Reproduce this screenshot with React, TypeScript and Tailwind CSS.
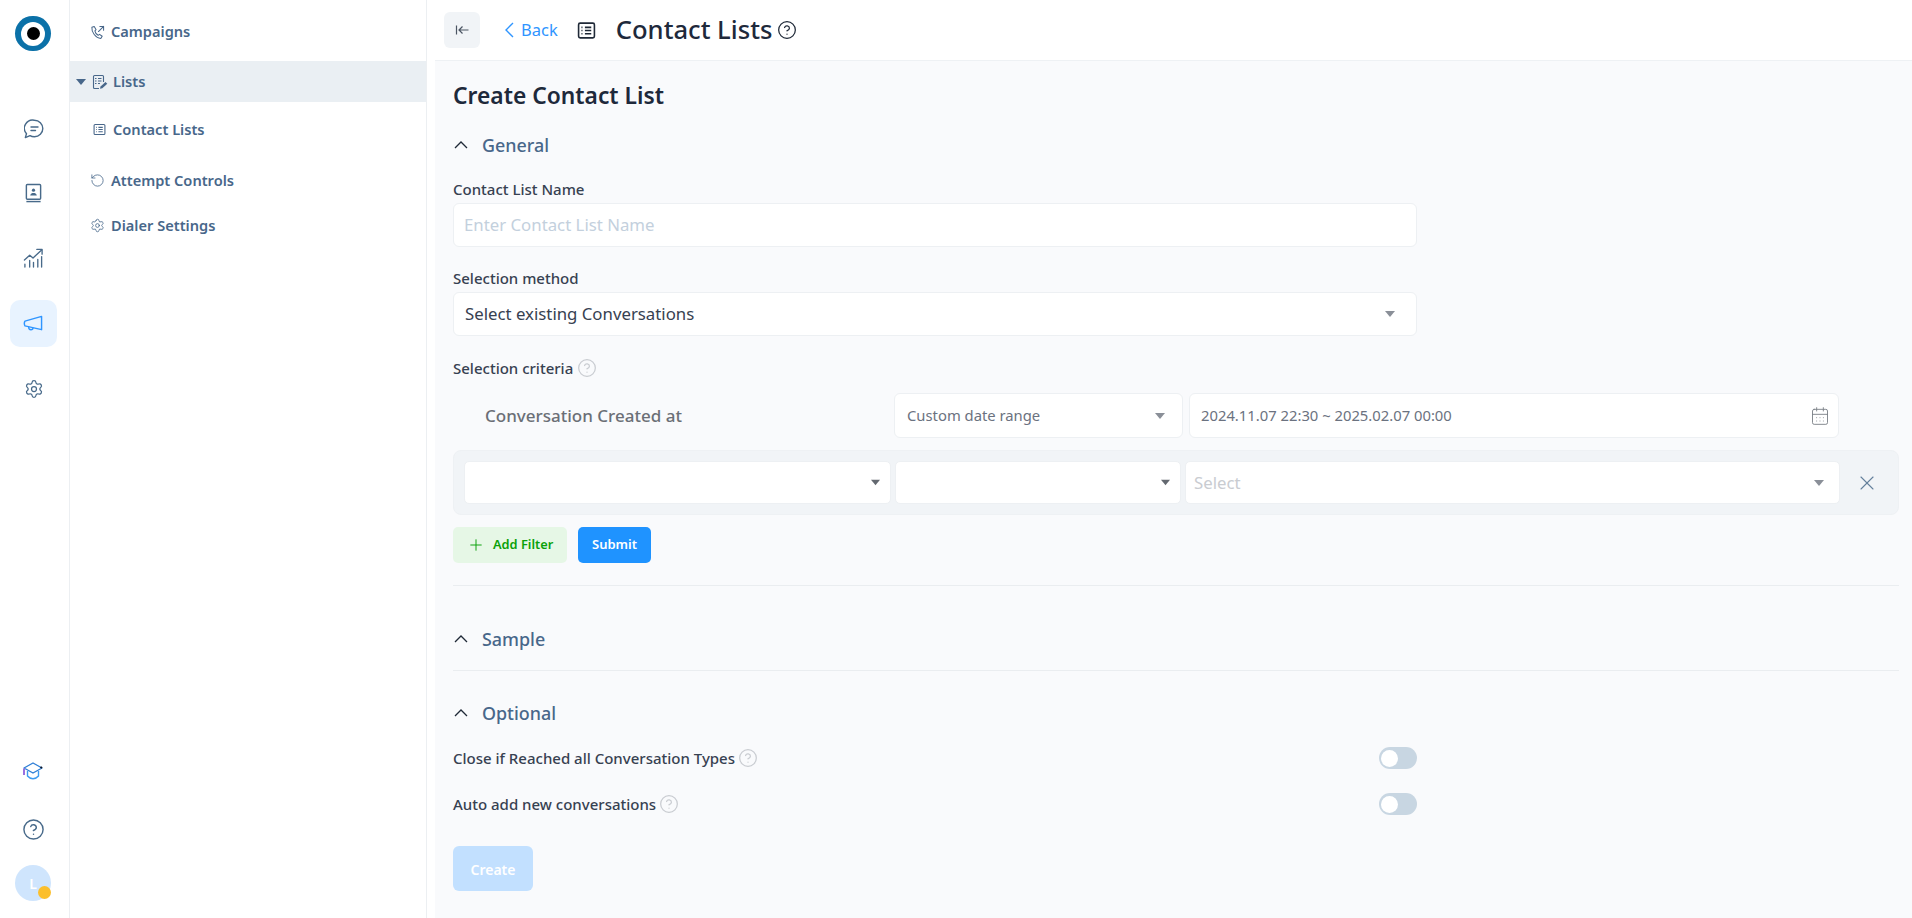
import { CalendarDays, CircleHelp, Plus, RotateCcw, Settings, X } from "lucide-react";

const font = "font-['Noto_Sans',sans-serif]";

function Caret({ className }: { className: string }) {
  return (
    <svg viewBox="0 0 10 6" className={className} fill="currentColor">
      <path d="M0 0h10L5 6z" />
    </svg>
  );
}

function RailButton({ children, active }: { children: React.ReactNode; active?: boolean }) {
  return (
    <div className={`w-[47px] h-[47px] rounded-[10px] flex items-center justify-center ${active ? "bg-[#e8f3ff] text-[#2f95ff]" : "text-[#486a8a]"}`}>
      {children}
    </div>
  );
}

function ChatIcon() {
  return (
    <svg viewBox="0 0 20 20" className="w-[20px] h-[20px]" fill="none" stroke="currentColor" strokeWidth="1.400" strokeLinecap="round" strokeLinejoin="round">
      <path d="M10.500 1.200a8.300 8.300 0 0 1 0 16.600c-1.800 0-3.300-.4-4.500-1.200l-4.700 2 1.200-3.800A8.300 8.300 0 0 1 10.500 1.200z" />
      <path d="M7 8h7M7 11.500h4.500" />
    </svg>
  );
}

function ContactBookIcon() {
  return (
    <svg viewBox="0 0 20 22" className="w-[19px] h-[21px]" fill="none" stroke="currentColor" strokeWidth="1.500">
      <rect x="2.500" y="1.500" width="15" height="15.500" rx="1" />
      <path d="M2.500 19.500h15" />
      <circle cx="10" cy="7.500" r="1.700" fill="currentColor" stroke="none" />
      <path d="M6.500 13c.4-2 2-2.600 3.500-2.600s3.100.6 3.500 2.600z" fill="currentColor" stroke="none" />
    </svg>
  );
}

function ChartIcon() {
  return (
    <svg viewBox="0 0 22 22" className="w-[21px] h-[21px]" fill="none" stroke="currentColor" strokeWidth="1.400" strokeLinecap="round" strokeLinejoin="round">
      <path d="M1.500 12.500 7 7.500l3.500 3L19.500 2" />
      <path d="M14.500 1.500h5.500v5" />
      <path d="M2 20v-3M7 20v-7M11 20v-5M15.500 20v-8M19.500 20v-11" />
    </svg>
  );
}

function MegaphoneIcon() {
  return (
    <svg viewBox="0 0 22 20" className="w-[21px] h-[19px]" fill="none" stroke="currentColor" strokeWidth="1.500" strokeLinejoin="round">
      <path d="M2 7.500 19.500 2.500v14L2 12.500c-.8-1.500-.8-3.500 0-5z" />
      <path d="M6 13.500c-.3 2 .8 3 2.300 3s2.200-.8 2.200-2" />
    </svg>
  );
}

function CapIcon() {
  return (
    <svg viewBox="0 0 20 18" className="w-[20px] h-[18px]" fill="none" strokeWidth="1.400" strokeLinejoin="round">
      <path d="M1 6 10 1l9 5-9 5z" stroke="#2f7fd6" />
      <path d="M4.500 9v5c1.500 1.800 3.500 2.700 5.500 2.700s4-.9 5.500-2.700V9" stroke="#3d9bf0" />
      <path d="M1 6.500V13" stroke="#9a6fe0" strokeWidth="2" />
      <path d="M17.500 5l1.500 1" stroke="#111827" strokeWidth="2" />
    </svg>
  );
}

function ListBoxIcon({ className }: { className: string }) {
  return (
    <svg viewBox="0 0 18 18" className={className} fill="none" stroke="currentColor" strokeWidth="1.500">
      <rect x="1.500" y="2" width="15" height="14" rx="1.500" />
      <path d="M7.500 6h6M7.500 9h6M7.500 12h6M4.200 6h1M4.200 9h1M4.200 12h1" />
    </svg>
  );
}

function ListEditIcon() {
  return (
    <svg viewBox="0 0 16 16" className="w-[16px] h-[16px]" fill="none" stroke="currentColor" strokeWidth="1.100">
      <path d="M11.500 8V2.500a1 1 0 0 0-1-1h-8a1 1 0 0 0-1 1v11a1 1 0 0 0 1 1H7" />
      <path d="M6 4.500h3.500M6 7h3.500M6 9.500h2M3 4.500h1.500M3 7h1.500M3 9.500h1.500" />
      <path d="M8 14.800l.5-2.300 5-4.500 1.800 1.800-5 4.500z" fill="currentColor" stroke="none" />
    </svg>
  );
}

function PhoneOutIcon() {
  return (
    <svg viewBox="0 0 16 16" className="w-[15px] h-[15px]" fill="none" stroke="currentColor" strokeWidth="1.100" strokeLinejoin="round" strokeLinecap="round">
      <path d="M4.500 1.500 2 2.500C1.500 7.500 6 14 11.500 14.500l1.500-2.500-2.800-2-1.500 1C7 10 5.500 8 5.200 6.300l1.300-1.300z" />
      <path d="M9 7l5.500-5.500M10.500 1.500h4v4" />
    </svg>
  );
}

function Help({ className }: { className: string }) {
  return <CircleHelp className={className} strokeWidth={1.500} />;
}

function Section({ title }: { title: string }) {
  return (
    <div className="flex items-center h-[24px]">
      <svg viewBox="0 0 14 8" className="w-[14px] h-[8px] text-[#1f2937] ml-[1px]" fill="none" stroke="currentColor" strokeWidth="1.300">
        <path d="M1 7l6-6 6 6" />
      </svg>
      <span className="ml-[14px] text-[17.900px] font-medium text-[#48678a]">{title}</span>
    </div>
  );
}

function Label({ children }: { children: React.ReactNode }) {
  return <div className="text-[15px] leading-[18px] font-medium text-[#374151]">{children}</div>;
}

function Toggle() {
  return (
    <div className="w-[38px] h-[22px] rounded-full bg-[#c8d6e2] flex items-center pl-[2px]">
      <div className="w-[17px] h-[17px] rounded-full bg-white" />
    </div>
  );
}

export default function App() {
  return (
    <div className={`${font} flex w-[1912px] h-[918px] overflow-hidden bg-white`}>
      {/* icon rail */}
      <div className="w-[70px] shrink-0 border-r border-[#eceff2] flex flex-col items-center">
        <div className="mt-[16px] -ml-[3px] w-[36px] h-[35px] rounded-full bg-[#0b71a8] flex items-center justify-center">
          <div className="w-[24px] h-[24px] rounded-full bg-white flex items-center justify-center">
            <div className="w-[13px] h-[13px] rounded-full bg-black" />
          </div>
        </div>
        <div className="mt-[54px] flex flex-col gap-[18px] items-center -ml-[2px]">
          <RailButton><ChatIcon /></RailButton>
          <RailButton><ContactBookIcon /></RailButton>
          <RailButton><ChartIcon /></RailButton>
          <RailButton active><MegaphoneIcon /></RailButton>
          <RailButton><Settings className="w-[20px] h-[20px]" strokeWidth={1.500} /></RailButton>
        </div>
        <div className="mt-auto flex flex-col items-center -ml-[3px]">
          <CapIcon />
          <Help className="w-[23px] h-[23px] text-[#486a8a] mt-[38px]" />
          <div className="relative mt-[24px] mb-[17px] w-[36px] h-[36px] rounded-full bg-[#cfe5fd] flex items-center justify-center text-white text-[14px] font-semibold">
            L
            <div className="absolute right-0 bottom-[2px] w-[13px] h-[13px] rounded-full bg-[#fbbf2d]" />
          </div>
        </div>
      </div>

      {/* section nav */}
      <div className="w-[357px] shrink-0 border-r border-[#eceff2] text-[14.600px] font-semibold text-[#48678a]">
        <div className="h-[61px] pt-[3px] flex items-center pl-[20px] gap-[6px]">
          <PhoneOutIcon />
          <span>Campaigns</span>
        </div>
        <div className="h-[41px] bg-[#eaeff3] flex items-center pl-[6px]">
          <Caret className="w-[10px] h-[6px]" />
          <span className="ml-[6px]"><ListEditIcon /></span>
          <span className="ml-[5px]">Lists</span>
        </div>
        <div className="h-[55px] flex items-center pl-[23px] gap-[7px]">
          <ListBoxIcon className="w-[13px] h-[13px]" />
          <span>Contact Lists</span>
        </div>
        <div className="h-[47px] flex items-center pl-[20px] gap-[6px]">
          <RotateCcw className="w-[15px] h-[15px]" strokeWidth={1.300} />
          <span>Attempt Controls</span>
        </div>
        <div className="h-[43px] flex items-center pl-[20px] gap-[6px]">
          <Settings className="w-[15px] h-[15px]" strokeWidth={1.300} />
          <span>Dialer Settings</span>
        </div>
      </div>

      {/* main */}
      <div className="flex-1 min-w-0 flex flex-col">
        <div className="h-[61px] shrink-0 flex items-center pl-[17px] ml-[8px] border-b border-[#eef1f4]">
          <div className="-ml-[8px] w-[36px] h-[36px] rounded-[6px] bg-[#f1f4f7] flex items-center justify-center text-[#4b5563]">
            <svg viewBox="0 0 14 14" className="w-[14px] h-[14px]" fill="none" stroke="currentColor" strokeWidth="1.200">
              <path d="M1.500 2.500v9M13.500 7H4M7.500 3.500 4 7l3.500 3.500" />
            </svg>
          </div>
          <svg viewBox="0 0 10 16" className="ml-[24px] w-[10px] h-[16px] text-[#2f95ff]" fill="none" stroke="currentColor" strokeWidth="1.400">
            <path d="M9 1 2 8l7 7" />
          </svg>
          <span className="ml-[7px] text-[16.500px] text-[#2f95ff]">Back</span>
          <ListBoxIcon className="ml-[19px] w-[19px] h-[19px] text-[#1f2937]" />
          <span className="ml-[20px] text-[25.600px] font-medium text-[#1e293b]">Contact Lists</span>
          <Help className="ml-[5px] w-[20px] h-[20px] text-[#1f2937]" />
        </div>

        <div className="flex-1 ml-[8px] bg-[#f9fafc] pl-[18px] pr-[13px] pt-[20px]">
          <div className="text-[22.800px] leading-[30px] font-semibold text-[#1e293b]">Create Contact List</div>
          <div className="mt-[22px]"><Section title="General" /></div>

          <div className="w-[964px]">
            <div className="mt-[23px]"><Label>Contact List Name</Label></div>
            <div className="mt-[5px] h-[44px] rounded-[6px] border border-[#edf0f3] bg-white flex items-center px-[10px] text-[16.800px] text-[#c3d0dd]">
              Enter Contact List Name
            </div>
            <div className="mt-[22px]"><Label>Selection method</Label></div>
            <div className="mt-[5px] h-[44px] rounded-[6px] border border-[#edf0f3] bg-white flex items-center justify-between pl-[11px] pr-[21px] text-[16.800px] text-[#374151]">
              Select existing Conversations
              <Caret className="w-[10px] h-[6px] text-[#8a8f98]" />
            </div>
          </div>

          <div className="mt-[22px] flex items-center gap-[4px]">
            <Label>Selection criteria</Label>
            <Help className="w-[20px] h-[20px] text-[#c9ccd1]" />
          </div>

          <div className="mt-[15px] h-[45px] flex items-center">
            <div className="w-[441px] pl-[32px] text-[17px] font-medium text-[#6b6f76]">Conversation Created at</div>
            <div className="w-[289px] h-[45px] rounded-[6px] border border-[#edf0f3] bg-white flex items-center justify-between pl-[12px] pr-[17px] text-[14.800px] text-[#6b7280]">
              Custom date range
              <Caret className="w-[10px] h-[6px] text-[#8a8f98]" />
            </div>
            <div className="ml-[6px] w-[650px] h-[45px] rounded-[6px] border border-[#edf0f3] bg-white flex items-center justify-between pl-[11px] pr-[8px] text-[14.800px] text-[#6b7280]">
              2024.11.07 22:30 ~ 2025.02.07 00:00
              <CalendarDays className="w-[20px] h-[20px] text-[#7b8087]" strokeWidth={1.100} />
            </div>
          </div>

          <div className="mt-[12px] h-[65px] rounded-[8px] bg-[#f1f4f7] border border-[#eef1f4] flex items-center pl-[10px]">
            <div className="w-[427px] h-[43px] rounded-[5px] bg-white border border-[#edf0f3] flex items-center justify-end pr-[10px]">
              <Caret className="w-[9px] h-[7px] text-[#636870]" />
            </div>
            <div className="ml-[4px] w-[286px] h-[43px] rounded-[5px] bg-white border border-[#edf0f3] flex items-center justify-end pr-[10px]">
              <Caret className="w-[9px] h-[7px] text-[#636870]" />
            </div>
            <div className="ml-[4px] w-[655px] h-[43px] rounded-[5px] bg-white border border-[#edf0f3] flex items-center justify-between pl-[8px] pr-[15px] text-[16.800px] text-[#c9ccd1]">
              Select
              <Caret className="w-[10px] h-[6px] text-[#8a8f98]" />
            </div>
            <X className="ml-[15px] w-[24px] h-[24px] text-[#64809c]" strokeWidth={1.100} />
          </div>

          <div className="mt-[12px] flex gap-[11px]">
            <div className="w-[114px] h-[36px] rounded-[5px] bg-[#e6f7e6] flex items-center pl-[14px] gap-[8px] text-[12.800px] font-semibold text-[#0aa10a]">
              <Plus className="w-[18px] h-[18px]" strokeWidth={1.300} />
              Add Filter
            </div>
            <div className="w-[73px] h-[36px] rounded-[5px] bg-[#1f93ff] flex items-center justify-center text-[13px] font-semibold text-white">
              Submit
            </div>
          </div>

          <div className="mt-[22px] border-t border-[#eaedf0]" />
          <div className="mt-[41px]"><Section title="Sample" /></div>
          <div className="mt-[19px] border-t border-[#eaedf0]" />
          <div className="mt-[30px]"><Section title="Optional" /></div>

          <div className="w-[964px]">
            <div className="mt-[22px] h-[22px] flex items-center justify-between">
              <div className="flex items-center gap-[3px]">
                <Label>Close if Reached all Conversation Types</Label>
                <Help className="w-[20px] h-[20px] text-[#c9ccd1]" />
              </div>
              <Toggle />
            </div>
            <div className="mt-[24px] h-[22px] flex items-center justify-between">
              <div className="flex items-center gap-[3px]">
                <Label>Auto add new conversations</Label>
                <Help className="w-[20px] h-[20px] text-[#c9ccd1]" />
              </div>
              <Toggle />
            </div>
          </div>

          <div className="mt-[31px] w-[80px] h-[45px] rounded-[6px] bg-[#c2e0ff] flex items-center justify-center pt-[1px] text-[14px] font-semibold text-white">
            Create
          </div>
        </div>
      </div>
    </div>
  );
}
